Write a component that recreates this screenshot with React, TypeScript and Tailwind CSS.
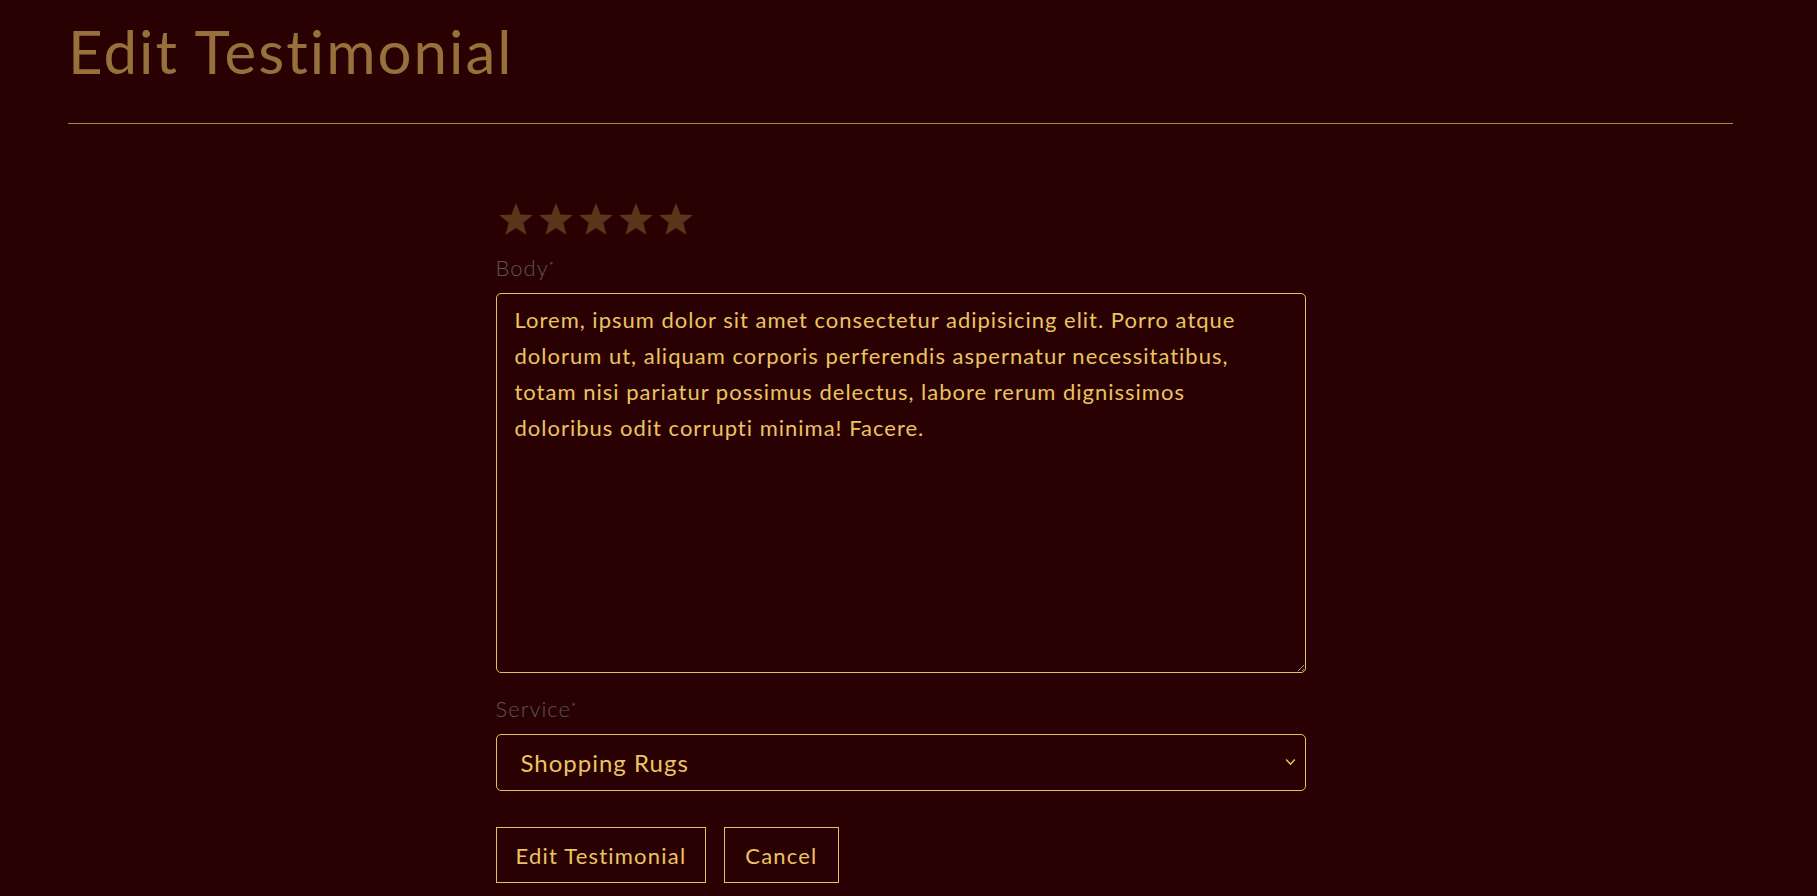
import React from "react";

function Star() {
  return (
    <svg width="40" height="36" viewBox="0 0 24 24" className="block">
      <path d="M12 1.3l3 7.75 8.3.35-6.5 5.15 2.25 8.05L12 18l-7.05 4.6 2.25-8.05L.7 9.4 9 9.05z" fill="#5c3419" />
    </svg>
  );
}

export default function App() {
  const body =
    "Lorem, ipsum dolor sit amet consectetur adipisicing elit. Porro atque dolorum ut, aliquam corporis perferendis aspernatur necessitatibus, totam nisi pariatur possimus delectus, labore rerum dignissimos doloribus odit corrupti minima! Facere.";
  return (
    <div className="min-h-[896px] w-full bg-[#2a0103] font-['Lato','Open_Sans',sans-serif]">
      <div className="ml-[68px] mr-[84px]">
        <h1 className="pt-[15px] text-[60px] leading-[72px] font-normal tracking-[2px] text-[#98703c]">
          Edit Testimonial
        </h1>
        <div className="mt-[36px] h-px bg-[#a88a40]" />
        <form className="mx-auto mt-[77px] w-[810px]" onSubmit={(e) => e.preventDefault()}>
          <div className="flex">
            {[0, 1, 2, 3, 4].map((i) => (
              <Star key={i} />
            ))}
          </div>
          <label className="mt-[16px] block text-[22px] leading-[30px] font-light tracking-[1px] text-[#5a5554]">
            Body<sup className="text-[12px] text-[#6a6160]">*</sup>
          </label>
          <textarea
            className="mt-[10px] block h-[380px] w-full rounded-[5px] border border-[#e8c05a] bg-transparent px-[18px] pt-[8px] pb-[4px] text-[22px] leading-[36px] tracking-[1px] text-[#ebc460] outline-none"
            defaultValue={body}
          />
          <label className="mt-[21px] block text-[22px] leading-[30px] font-light tracking-[1px] text-[#5a5554]">
            Service<sup className="text-[12px] text-[#6a6160]">*</sup>
          </label>
          <div className="relative mt-[10px]">
            <select
              className="block h-[57px] w-full appearance-none rounded-[5px] border border-[#e8c05a] bg-transparent pl-[24px] text-[24px] tracking-[1px] text-[#ebc460] outline-none"
              defaultValue="Shopping Rugs"
            >
              <option className="bg-[#2a0103]">Shopping Rugs</option>
              <option className="bg-[#2a0103]">Rug Cleaning</option>
              <option className="bg-[#2a0103]">Rug Repair</option>
            </select>
            <svg
              className="pointer-events-none absolute right-[10px] top-[24px]"
              width="11"
              height="8"
              viewBox="0 0 11 8"
              fill="none"
            >
              <path d="M1.2 1.5l4.3 4.7 4.3-4.7" stroke="#ebc460" strokeWidth="1.5" />
            </svg>
          </div>
          <div className="mt-[36px] flex gap-[18px]">
            <button
              type="submit"
              className="h-[56px] border border-[#e8c05a] px-[19px] text-[22px] tracking-[1.2px] text-[#ebc460]"
            >
              Edit Testimonial
            </button>
            <button
              type="button"
              className="h-[56px] border border-[#e8c05a] px-[20px] text-[22px] tracking-[1.2px] text-[#ebc460]"
            >
              Cancel
            </button>
          </div>
        </form>
      </div>
    </div>
  );
}
